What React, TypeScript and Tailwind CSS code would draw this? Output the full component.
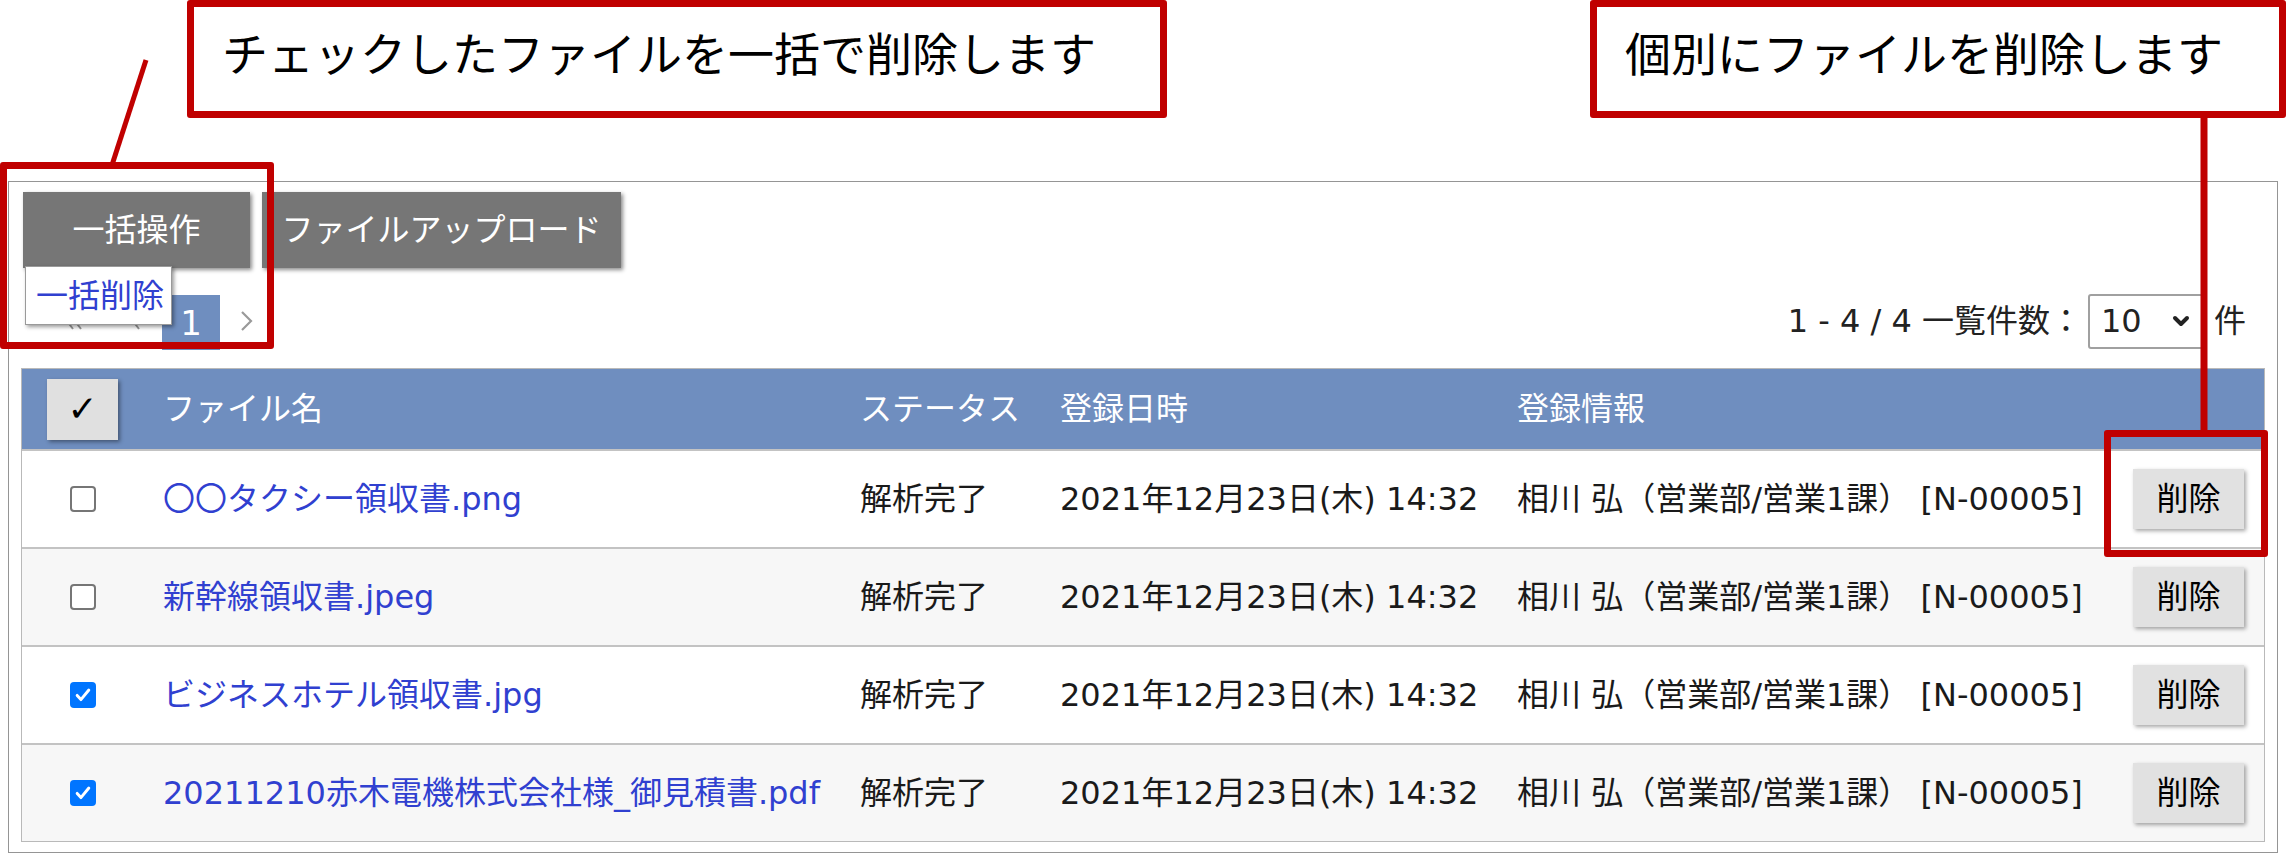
import { ChevronDown } from "lucide-react";

type FileRow = {
  name: string;
  checked: boolean;
};

const rows: FileRow[] = [
  { name: "〇〇タクシー領収書.png", checked: false },
  { name: "新幹線領収書.jpeg", checked: false },
  { name: "ビジネスホテル領収書.jpg", checked: true },
  { name: "20211210赤木電機株式会社様_御見積書.pdf", checked: true },
];

const Checkbox = ({ checked }: { checked: boolean }) =>
  checked ? (
    <div className="w-[26px] h-[26px] rounded-[4px] bg-[#0075ff] flex items-center justify-center">
      <svg viewBox="0 0 24 24" className="w-[20px] h-[20px]" fill="none" stroke="white" strokeWidth={3.5} strokeLinecap="round" strokeLinejoin="round">
        <path d="M5 12.5l4.5 5L19 6" />
      </svg>
    </div>
  ) : (
    <div className="w-[26px] h-[26px] rounded-[4px] border-2 border-[#767676] bg-white" />
  );

// first / prev arrows, mostly hidden under the open menu
const PagerArrows = () => (
  <svg width={90} height={40} viewBox="0 0 90 40" className="ml-[50px]" fill="none" stroke="#999" strokeWidth={2}>
    <path d="M14 12l-6 8 6 8M22 12l-6 8 6 8" />
    <path d="M80 12l-6 8 6 8" />
  </svg>
);

const App = () => {
  return (
    <div className="relative w-[2287px] h-[855px] bg-white overflow-hidden text-[#1a1a1a] font-['DejaVu_Sans','Noto_Sans_CJK_JP',sans-serif]">
      {/* callouts */}
      <div className="flex h-[181px] items-start">
        <div className="ml-[187px] w-[980px] h-[118px] border-[7px] border-[#c00000] rounded-[3px] pl-[28px] pt-[21px] text-[46px] leading-none text-black font-['Noto_Sans_CJK_JP',sans-serif]">
          チェックしたファイルを一括で削除します
        </div>
        <div className="ml-auto mr-px w-[696px] h-[118px] border-[7px] border-[#c00000] rounded-[3px] pl-[28px] pt-[21px] text-[46px] leading-none text-black font-['Noto_Sans_CJK_JP',sans-serif]">
          個別にファイルを削除します
        </div>
      </div>

      {/* panel */}
      <div className="ml-[8px] w-[2270px] h-[672px] border border-[#959595]">
        <div className="mt-[10px] ml-[14px] flex gap-[12px]">
          <div className="relative">
            <div className="w-[227px] h-[76px] bg-[#767676] text-white text-[32px] leading-none flex items-center justify-center shadow-[2px_2px_4px_rgba(0,0,0,0.45)]">
              一括操作
            </div>
            <div className="absolute left-[2px] top-[74px] z-10 w-[147px] h-[59px] bg-white border border-[#9a9a9a] shadow-[2px_2px_4px_rgba(0,0,0,0.4)] flex items-center pl-[10px] text-[32px] leading-none text-[#3040d0]">
              一括削除
            </div>
          </div>
          <div className="w-[359px] h-[76px] bg-[#767676] text-white text-[32px] leading-none flex items-center justify-center shadow-[2px_2px_4px_rgba(0,0,0,0.45)]">
            ファイルアップロード
          </div>
        </div>

        {/* pagination */}
        <div className="mt-[24px] h-[58px] flex items-center">
          <PagerArrows />
          <div className="ml-[13px] w-[58px] h-[55px] self-end bg-[#6f8ebf] text-white text-[34px] leading-none flex items-center justify-center">
            1
          </div>
          <svg width={20} height={30} viewBox="0 0 20 30" className="ml-[17px]" fill="none" stroke="#9a9a9a" strokeWidth={2.2}>
            <path d="M5 6l9 9-9 9" />
          </svg>
          <div className="ml-auto mr-[31px] flex items-center text-[32px] leading-none text-[#222]">
            <span>1 - 4 / 4 一覧件数：</span>
            <div className="ml-[6px] w-[117px] h-[55px] self-start border-2 border-[#a0a0a0] rounded-[3px] bg-white flex items-center pl-[11px]">
              <span>10</span>
              <ChevronDown className="ml-auto mr-[10px] w-[24px] h-[24px]" strokeWidth={4} />
            </div>
            <span className="ml-[9px]">件</span>
          </div>
        </div>

        {/* table */}
        <div className="mt-[18px] mx-[12px] border border-[#b9b9b9] text-[32px] leading-none">
          <div className="h-[80px] bg-[#6f8ebf] text-white grid grid-cols-[121px_697px_200px_457px_616px_1fr] items-center">
            <div className="flex justify-center">
              <div className="w-[71px] h-[61px] bg-[#e0e0e0] text-black text-[36px] font-bold shadow-[2px_2px_4px_rgba(0,0,0,0.4)] flex items-center justify-center">
                ✓
              </div>
            </div>
            <div className="pl-5">ファイル名</div>
            <div className="pl-5">ステータス</div>
            <div className="pl-5">登録日時</div>
            <div className="pl-5">登録情報</div>
            <div />
          </div>
          {rows.map((row, i) => (
            <div
              key={row.name}
              className={`h-[98px] border-t-2 border-[#c3c3c3] grid grid-cols-[121px_697px_200px_457px_616px_1fr] items-center ${i % 2 === 1 ? "bg-[#f7f7f7]" : "bg-white"}`}
            >
              <div className="flex justify-center">
                <Checkbox checked={row.checked} />
              </div>
              <div className="pl-5 text-[#3040d0] whitespace-nowrap">{row.name}</div>
              <div className="pl-5">解析完了</div>
              <div className="pl-5 whitespace-nowrap">2021年12月23日(木) 14:32</div>
              <div className="pl-5 whitespace-nowrap">相川 弘（営業部/営業1課） [N-00005]</div>
              <div className="pl-5">
                <div className="w-[111px] h-[60px] bg-[#e1e1e1] text-black shadow-[2px_2px_4px_rgba(0,0,0,0.35)] flex items-center justify-center">
                  削除
                </div>
              </div>
            </div>
          ))}
        </div>
      </div>

      {/* annotation overlays */}
      <div className="absolute left-0 top-[162px] w-[274px] h-[187px] border-[7px] border-[#c00000] rounded-[3px] z-20 pointer-events-none" />
      <div className="absolute left-[2104px] top-[430px] w-[164px] h-[127px] border-[7px] border-[#c00000] rounded-[3px] z-20 pointer-events-none" />
      <svg className="absolute left-0 top-0 z-20 pointer-events-none" width={2287} height={855}>
        <line x1={146} y1={60} x2={112} y2={165} stroke="#c00000" strokeWidth={5} />
        <line x1={2204} y1={116} x2={2204} y2={432} stroke="#c00000" strokeWidth={7} />
      </svg>
    </div>
  );
};

export default App;
